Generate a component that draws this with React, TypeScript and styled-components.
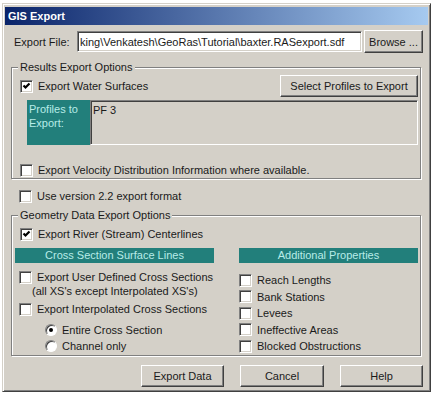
import React from 'react';
import styled, { createGlobalStyle } from 'styled-components';

const GlobalStyle = createGlobalStyle`
  body {
    margin: 0;
    background: #ffffff;
    font-family: "Liberation Sans", Arial, sans-serif;
  }
`;

const face = '#d4d0c8';

const Window = styled.div`
  box-sizing: border-box;
  width: 429px;
  height: 389px;
  margin: 3px 0 0 2px;
  padding: 3px 2px 2px 2px;
  background: ${face};
  border: 1px solid;
  border-color: ${face} #404040 #404040 ${face};
  box-shadow: inset 1px 1px 0 #ffffff, inset -1px -1px 0 #808080;
  font-size: 11px;
  color: #1a1a1a;
`;

const TitleBar = styled.div`
  height: 18px;
  display: flex;
  align-items: center;
  padding-left: 3px;
  background: linear-gradient(to right, #0a246a, #a6caf0);
  color: #ffffff;
  font-weight: bold;
  font-size: 11px;
`;

const FileRow = styled.div`
  display: flex;
  align-items: center;
  height: 23px;
  margin-top: 5px;
  padding-left: 9px;
`;

const FileLabel = styled.span`
  width: 63px;
`;

const TextField = styled.input`
  box-sizing: border-box;
  width: 285px;
  height: 21px;
  padding: 0 2px;
  margin: 0;
  background: #ffffff;
  border: 1px solid;
  border-color: #808080 #ffffff #ffffff #808080;
  box-shadow: inset 1px 1px 0 #404040, inset -1px -1px 0 ${face};
  font-family: inherit;
  font-size: 11px;
  color: #1a1a1a;
  outline: none;
`;

const Button = styled.button<{ $w: number; $h?: number }>`
  box-sizing: border-box;
  width: ${p => p.$w}px;
  height: ${p => p.$h ?? 23}px;
  margin: 0;
  padding: 0;
  background: ${face};
  border: 1px solid;
  border-color: #ffffff #404040 #404040 #ffffff;
  box-shadow: inset -1px -1px 0 #808080, inset 1px 1px 0 ${face};
  font-family: inherit;
  font-size: 11px;
  color: #1a1a1a;
`;

const BrowseButton = styled(Button)`
  margin-left: 2px;
`;

const Group = styled.fieldset<{ $padLeft: number; $top: number; $bottom?: number }>`
  margin: ${p => p.$top}px 7px 0 6px;
  padding: 1px 2px ${p => p.$bottom ?? 0}px ${p => p.$padLeft}px;
  min-width: 0;
  border: 1px solid #808080;
  box-shadow: 1px 1px 0 #ffffff, inset 1px 1px 0 #ffffff;
`;

const Legend = styled.legend<{ $shift: number }>`
  position: relative;
  margin-left: ${p => p.$shift}px;
  padding: 0 2px;
  line-height: 13px;
  background: ${face};
`;

const CheckRow = styled.div<{ $h?: number; $indent?: number; $top?: number }>`
  display: flex;
  align-items: center;
  gap: 5px;
  height: ${p => p.$h ?? 14}px;
  margin-left: ${p => p.$indent ?? 0}px;
  margin-top: ${p => p.$top ?? 0}px;
  white-space: nowrap;
`;

const Box = styled.span`
  box-sizing: border-box;
  flex: none;
  width: 13px;
  height: 13px;
  background: #ffffff;
  border: 1px solid;
  border-color: #808080 #ffffff #ffffff #808080;
  box-shadow: inset 1px 1px 0 #404040, inset -1px -1px 0 ${face};
  display: flex;
  align-items: center;
  justify-content: center;
`;

const Radio = styled.span`
  box-sizing: border-box;
  flex: none;
  width: 12px;
  height: 12px;
  border-radius: 50%;
  background: #ffffff;
  border: 1px solid;
  border-color: #808080 #ffffff #ffffff #808080;
  box-shadow: inset 1px 1px 0 #404040;
  display: flex;
  align-items: center;
  justify-content: center;
`;

const Dot = styled.span`
  width: 4px;
  height: 4px;
  border-radius: 50%;
  background: #000;
`;

const TopRow = styled.div`
  display: flex;
  align-items: center;
  justify-content: space-between;
  height: 22px;
`;

const ProfilesRow = styled.div`
  display: flex;
  height: 45px;
  margin: 3px 0 0 7px;
`;

const TealLabel = styled.div`
  box-sizing: border-box;
  width: 63px;
  padding: 2px 2px;
  line-height: 14px;
  background: #227f7b;
  color: #b8ece8;
`;

const ProfileList = styled.div`
  box-sizing: border-box;
  flex: 1;
  padding: 3px 2px;
  border: 1px solid;
  border-color: #808080 #ffffff #ffffff #808080;
  box-shadow: inset 1px 1px 0 #404040, inset -1px -1px 0 ${face};
`;

const Columns = styled.div`
  display: grid;
  grid-template-columns: 199px 179px;
  column-gap: 25px;
  margin-top: 7px;
`;

const Column = styled.div`
  display: flex;
  flex-direction: column;
`;

const PropList = styled.div`
  display: flex;
  flex-direction: column;
  margin-top: 9px;
`;

const Header = styled.div`
  height: 15px;
  line-height: 15px;
  text-align: center;
  background: #227f7b;
  color: #b8ece8;
`;

const NoteLine = styled.div`
  height: 15px;
  line-height: 15px;
  margin-left: 17px;
  white-space: nowrap;
`;

const ButtonRow = styled.div`
  display: flex;
  justify-content: flex-end;
  gap: 16px;
  margin-top: 9px;
  padding-right: 5px;
`;

const Check = ({ on }: { on?: boolean }) => (
  <Box>
    {on && (
      <svg width="9" height="9" viewBox="0 0 9 9">
        <polyline points="1.5,3.5 3.5,5.5 7.5,1.5" fill="none" stroke="#000" strokeWidth="2.2" />
      </svg>
    )}
  </Box>
);

const properties = ['Reach Lengths', 'Bank Stations', 'Levees', 'Ineffective Areas', 'Blocked Obstructions'];

export default function App() {
  return (
    <>
      <GlobalStyle />
      <Window>
        <TitleBar>GIS Export</TitleBar>

        <FileRow>
          <FileLabel>Export File:</FileLabel>
          <TextField readOnly value="king\Venkatesh\GeoRas\Tutorial\baxter.RASexport.sdf" />
          <BrowseButton $w={59}>Browse ...</BrowseButton>
        </FileRow>

        <Group $padLeft={8} $top={8} $bottom={1}>
          <Legend $shift={-2}>Results Export Options</Legend>
          <TopRow>
            <CheckRow>
              <Check on />
              Export Water Surfaces
            </CheckRow>
            <Button $w={138} $h={22}>Select Profiles to Export</Button>
          </TopRow>
          <ProfilesRow>
            <TealLabel>
              Profiles to
              <br />
              Export:
            </TealLabel>
            <ProfileList>PF 3</ProfileList>
          </ProfilesRow>
          <CheckRow $top={18}>
            <Check />
            Export Velocity Distribution Information where available.
          </CheckRow>
        </Group>

        <CheckRow $indent={14} $top={10}>
          <Check />
          Use version 2.2 export format
        </CheckRow>

        <Group $padLeft={3} $top={6}>
          <Legend $shift={3}>Geometry Data Export Options</Legend>
          <CheckRow $indent={5} $top={4}>
            <Check on />
            Export River (Stream) Centerlines
          </CheckRow>
          <Columns>
            <Column>
              <Header>Cross Section Surface Lines</Header>
              <CheckRow $indent={4} $top={7}>
                <Check />
                Export User Defined Cross Sections
              </CheckRow>
              <NoteLine>(all XS's except Interpolated XS's)</NoteLine>
              <CheckRow $indent={4} $top={3}>
                <Check />
                Export Interpolated Cross Sections
              </CheckRow>
              <CheckRow $indent={30} $top={7}>
                <Radio>
                  <Dot />
                </Radio>
                Entire Cross Section
              </CheckRow>
              <CheckRow $indent={30} $top={2}>
                <Radio />
                Channel only
              </CheckRow>
            </Column>
            <Column>
              <Header>Additional Properties</Header>
              <PropList>
                {properties.map(p => (
                  <CheckRow key={p} $h={16.5}>
                    <Check />
                    {p}
                  </CheckRow>
                ))}
              </PropList>
            </Column>
          </Columns>
        </Group>

        <ButtonRow>
          <Button $w={83} $h={22}>Export Data</Button>
          <Button $w={84} $h={22}>Cancel</Button>
          <Button $w={83} $h={22}>Help</Button>
        </ButtonRow>
      </Window>
    </>
  );
}
